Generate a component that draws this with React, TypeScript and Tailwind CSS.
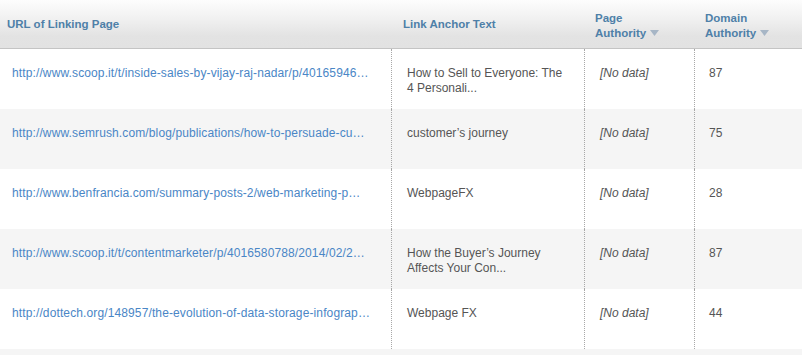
import React from "react";

const rows = [
  {
    url: "http://www.scoop.it/t/inside-sales-by-vijay-raj-nadar/p/40165946…",
    anchor: ["How to Sell to Everyone: The", "4 Personali..."],
    da: "87",
  },
  {
    url: "http://www.semrush.com/blog/publications/how-to-persuade-cu…",
    anchor: ["customer’s journey"],
    da: "75",
  },
  {
    url: "http://www.benfrancia.com/summary-posts-2/web-marketing-p…",
    anchor: ["WebpageFX"],
    da: "28",
  },
  {
    url: "http://www.scoop.it/t/contentmarketer/p/4016580788/2014/02/2…",
    anchor: ["How the Buyer’s Journey", "Affects Your Con..."],
    da: "87",
  },
  {
    url: "http://dottech.org/148957/the-evolution-of-data-storage-infograp…",
    anchor: ["Webpage FX"],
    da: "44",
  },
];

function Tri() {
  return (
    <svg width="9" height="6" viewBox="0 0 9 6" className="inline-block ml-[4px] align-middle">
      <path d="M0 0 L9 0 L4.5 6 Z" fill="#a7b6c6" />
    </svg>
  );
}

export default function App() {
  return (
    <div
      className="w-[802px] h-[355px] overflow-hidden bg-[#f5f5f5] text-[12px] leading-[15px]"
      style={{ fontFamily: '"Liberation Sans", Arial, sans-serif' }}
    >
      <div className="grid grid-cols-[391px_193px_110px_108px] h-[49px] border-b border-[#c4c4c4] bg-[linear-gradient(to_bottom,#fdfdfd_0%,#f0f0f0_40%,#e3e3e3_75%,#e2e2e2_100%)] font-bold text-[11.5px] text-[#4e80a8]">
        <div className="flex items-center pl-[7px]">URL of Linking Page</div>
        <div className="flex items-center pl-[12px]">Link Anchor Text</div>
        <div className="flex items-center pl-[11px]">
          <div className="pt-[3px]">
            Page
            <br />
            <span className="whitespace-nowrap">
              Authority
              <Tri />
            </span>
          </div>
        </div>
        <div className="flex items-center pl-[11px]">
          <div className="pt-[3px]">
            Domain
            <br />
            <span className="whitespace-nowrap">
              Authority
              <Tri />
            </span>
          </div>
        </div>
      </div>
      {rows.map((r, i) => (
        <div
          key={i}
          className={`grid grid-cols-[391px_193px_110px_108px] h-[60px] ${
            i % 2 === 0 ? "bg-white" : "bg-[#f5f5f5]"
          }`}
        >
          <div className="pl-[12px] pt-[17px] text-[#4a86c6] whitespace-nowrap overflow-hidden tracking-[0.12px]">
            {r.url}
          </div>
          <div className="border-l border-dotted border-[#a8a8a8] pl-[15px] pt-[17px] text-[#555555]">
            {r.anchor.map((a, j) => (
              <div key={j}>{a}</div>
            ))}
          </div>
          <div className="border-l border-dotted border-[#a8a8a8] pl-[15px] pt-[17px] text-[#555555] italic">
            [No data]
          </div>
          <div className="border-l border-dotted border-[#a8a8a8] pl-[14px] pt-[17px] text-[#555555]">
            {r.da}
          </div>
        </div>
      ))}
    </div>
  );
}
